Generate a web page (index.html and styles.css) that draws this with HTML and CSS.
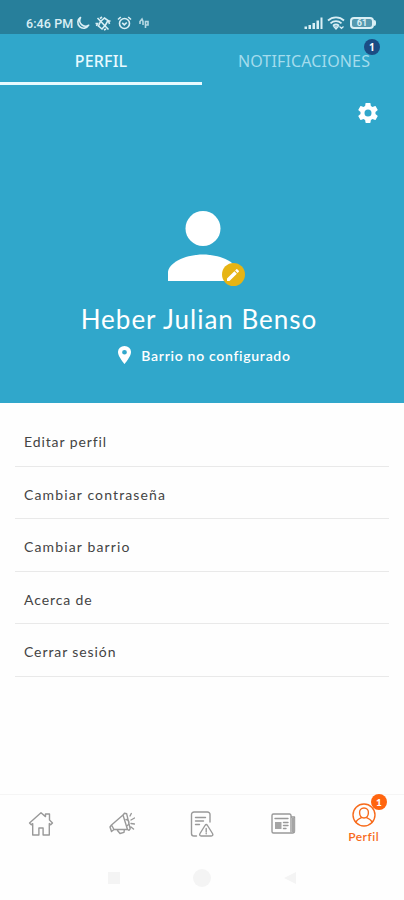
FILE: index.html
```
<!DOCTYPE html>
<html lang="es">
<head>
    <meta charset="UTF-8">
    <meta name="viewport" content="width=device-width, initial-scale=1.0">
    <title>Perfil</title>
    <link rel="stylesheet" href="styles.css">
</head>
<body>
<div id="app">
    <!-- Barra de estado -->
    <div class="status-bar">
        <div class="status-left">
            <span class="clock">6:46 PM</span>
            <svg width="14" height="14" viewBox="0 0 14 14" fill="none" stroke="currentColor" stroke-width="1.6">
                <path d="M4.500 1.500A5.800 5.800 0 1 0 12.700 9.200 5.800 5.800 0 0 1 4.500 1.500Z" stroke-linejoin="round"/>
            </svg>
            <svg class="vibrate" width="16" height="15" viewBox="0 0 16 15" fill="none" stroke="currentColor" stroke-width="1.600">
                <path d="M5.500 5.500 9.500 2 13 4.500 10.500 9 7 13 3.500 10ZM2.500 2l11 11.500M.5 7.500h2l-1 2.500M15.500 5h-2l1 3M5 2.500 7 1M9 14l2-1"/>
            </svg>
            <svg class="alarm" width="15" height="14" viewBox="0 0 15 14" fill="none" stroke="currentColor" stroke-width="1.600">
                <circle cx="7.500" cy="7.500" r="5"/>
                <path d="M1 3.500 3.800 1M14 3.500 11.200 1M5.200 6.800 7.300 8.800 9.800 6.500"/>
            </svg>
            <svg class="app-mark" width="11" height="12" viewBox="0 0 11 12" fill="none" stroke="currentColor" stroke-width="1.600">
                <path d="M1 7V4.500L3 2l1 2.500V8M6.500 11V4.500H9V8H7" opacity=".8"/>
            </svg>
        </div>
        <div class="status-right">
            <svg width="19" height="12" viewBox="0 0 19 12" fill="currentColor">
                <path d="M.5 9.500h2.500V12H.5zM4.500 8H7v4H4.500zM8.500 6H11v6H8.500zM12.500 3.500H15V12h-2.500zM16.500.5H18.500V12h-2z"/>
            </svg>
            <svg width="18" height="14" viewBox="0 0 18 14" fill="none" stroke="currentColor" stroke-width="1.800">
                <path d="M1 4.500C5.500.3 12.500.3 17 4.500M3.500 7.300c3.200-2.900 7.800-2.900 11 0M6 9.800c1.800-1.500 4.200-1.500 6 0"/>
                <path d="M7 10.800 9 13l2-2.200ZM12.500 10.500l2 2 2-2" stroke-width="1.200"/>
            </svg>
            <div class="battery">61</div>
        </div>
    </div>

    <!-- Cabecera con pestañas y datos del usuario -->
    <header class="hero">
        <nav class="tabs">
            <div class="tab active"><span>PERFIL</span></div>
            <div class="tab"><span>NOTIFICACIONES</span><b class="tab-badge">1</b></div>
        </nav>
        <div class="settings">
            <svg width="24" height="24" viewBox="0 0 24 24" fill="currentColor">
                <path d="M19.430 12.980c.04-.32.07-.64.07-.98s-.03-.66-.07-.98l2.110-1.650c.19-.15.24-.42.12-.64l-2-3.460c-.12-.22-.39-.3-.61-.22l-2.490 1c-.52-.4-1.080-.73-1.690-.98l-.38-2.650C14.460 2.180 14.250 2 14 2h-4c-.25 0-.46.18-.49.42l-.38 2.650c-.61.25-1.170.59-1.690.98l-2.490-1c-.23-.09-.49 0-.61.22l-2 3.460c-.13.22-.07.49.12.64l2.110 1.650c-.04.32-.07.65-.07.98s.03.66.07.98l-2.110 1.650c-.19.15-.24.42-.12.64l2 3.460c.12.22.39.3.61.22l2.490-1c.52.4 1.080.73 1.690.98l.38 2.650c.03.24.24.42.49.42h4c.25 0 .46-.18.49-.42l.38-2.650c.61-.25 1.170-.59 1.690-.98l2.490 1c.23.09.49 0 .61-.22l2-3.460c.12-.22.07-.49-.12-.64zM12 15.500a3.500 3.500 0 1 1 0-7 3.500 3.500 0 0 1 0 7z"/>
            </svg>
        </div>
        <div class="avatar">
            <svg width="70" height="70" viewBox="0 0 70 70" fill="currentColor">
                <circle cx="35" cy="17.500" r="17.500"/>
                <path d="M0 70V60.500C2 50 20 43.500 35 43.500S68 50 70 60.500V70Z"/>
            </svg>
            <div class="edit">
                <svg width="16" height="16" viewBox="0 0 24 24" fill="currentColor">
                    <path d="M3 17.250V21h3.750L17.810 9.940l-3.750-3.750zM20.710 7.040a1 1 0 0 0 0-1.410l-2.340-2.340a1 1 0 0 0-1.410 0l-1.830 1.830 3.750 3.750z"/>
                </svg>
            </div>
        </div>
        <h1>Heber Julian Benso</h1>
        <p class="place">
            <svg width="13" height="18" viewBox="0 0 12 18" fill="currentColor" fill-rule="evenodd" preserveAspectRatio="none">
                <path d="M6 0a6 6 0 0 0-6 6.200C0 10.500 6 18 6 18s6-7.500 6-11.800A6 6 0 0 0 6 0zm0 8.400a2.200 2.200 0 1 1 0-4.400 2.200 2.200 0 0 1 0 4.400z"/>
            </svg>
            <span>Barrio no configurado</span>
        </p>
    </header>

    <ul class="menu">
        <li>Editar perfil</li>
        <li class="wide">Cambiar contraseña</li>
        <li class="wide">Cambiar barrio</li>
        <li>Acerca de</li>
        <li>Cerrar sesión</li>
    </ul>

    <!-- Navegación inferior -->
    <nav class="bottom-nav">
        <div class="nav-item">
            <svg width="26" height="26" viewBox="0 0 26 26">
                <path d="M1.500 12 13 1.800l4.500 3.800V3h4v6l3 3-1.800 1.800-1.400-1.200V24h-6.200v-7h-4.200v7H4.700V12.600l-1.400 1.200Z"/>
            </svg>
        </div>
        <div class="nav-item">
            <svg width="26" height="26" viewBox="0 0 26 26">
                <path d="M2.500 14 14 4l4.500 14.500H5ZM2.500 14 1 16l1.500 4.500L5 18.500M14 4l1.500-1.800 2.200.6 3.500 15-1.200 1.500-1.500-.8M17 8.500c3 0 4 4 1.500 6M8.500 19.500l2.500 3 4-1.200.3-2.300M21 5l1.300-2.500M22 9l3.500-2M22 12.500l3.500.5M22 16l2.500 2"/>
            </svg>
        </div>
        <div class="nav-item">
            <svg width="26" height="26" viewBox="0 0 26 26">
                <path d="M7.500 25H5a2.500 2.500 0 0 1-2.500-2.500v-19A2.500 2.500 0 0 1 5 1h13.500A2.500 2.500 0 0 1 21 3.500V11M6.500 6.500h10M6.500 10h8M6.500 13.500h4M16 14.500c.8-1.300 1.700-1.300 2.500 0l5 8c.8 1.400.2 2.500-1.200 2.500H12.200c-1.400 0-2-1.100-1.200-2.500ZM17.200 17.500v3.500M17.200 22.500v.3"/>
            </svg>
        </div>
        <div class="nav-item">
            <svg width="26" height="22" viewBox="0 0 26 22">
                <path d="M21 18.500V2.500A1.500 1.500 0 0 0 19.500 1h-16A1.500 1.500 0 0 0 2 2.500v16A1.500 1.500 0 0 0 3.500 20h19a2 2 0 0 0 2-2V4H21M5 5.500h13M13.500 9.500H18M13.500 12.500H18M13.500 15.500H16"/>
                <path class="solid" d="M5 9h6.500v7H5zM22 5h3v14h-3z"/>
            </svg>
        </div>
        <div class="nav-item current">
            <svg width="24" height="24" viewBox="0 0 24 24">
                <circle cx="12" cy="12" r="11"/>
                <path d="M12 5c3 0 4.600 2 4.400 5-.2 3-2 5-4.400 5s-4.200-2-4.400-5C7.400 7 9 5 12 5ZM4 19.500c.5-2.500 2.500-3.500 5.500-4.800M20 19.500c-.5-2.500-2.500-3.500-5.500-4.800"/>
            </svg>
            <span>Perfil</span>
            <b class="nav-badge">1</b>
        </div>
    </nav>

    <div class="system-nav">
        <svg width="14" height="14" viewBox="0 0 14 14"><path d="M1 1h12v12H1z"/></svg>
        <svg width="20" height="20" viewBox="0 0 20 20"><circle cx="10" cy="10" r="9"/></svg>
        <svg width="14" height="14" viewBox="0 0 14 14"><path d="M13 1v12L1 7z"/></svg>
    </div>
</div>
</body>
</html>
```

FILE: styles.css
```
:root {
    --blue: #30a7cb;
    --blue-dark: #277f9b;
    --orange: #f76b1c;
    --text: #444;
    --line: #e9e9e9;
}

* {
    margin: 0;
    padding: 0;
    box-sizing: border-box;
}

body {
    background: #fefefe;
    color: var(--text);
    font-family: Lato, "Open Sans", sans-serif;
}

#app {
    display: flex;
    flex-direction: column;
    height: 900px;
    overflow: hidden;
}

svg {
    display: block;
    flex: none;
}

/* Barra de estado */
.status-bar {
    display: flex;
    justify-content: space-between;
    height: 34px;
    padding: 11px 28px 0 26px;
    background: var(--blue-dark);
    color: #d9eff5;
}

.status-left,
.status-right {
    display: flex;
    align-items: center;
    height: 24px;
}

.clock {
    width: 50px;
    font-family: Roboto, sans-serif;
    font-size: 12.5px;
    font-weight: 500;
    letter-spacing: 0.1px;
    white-space: nowrap;
}

.vibrate {
    margin-left: 5px;
}

.alarm {
    margin-left: 6px;
}

.app-mark {
    margin-left: 7px;
}

.status-right {
    gap: 4px;
}

.battery {
    position: relative;
    width: 24px;
    height: 12px;
    margin: 0 2px 0 1px;
    border: 2px solid currentColor;
    border-radius: 4px;
    background: #5599af;
    font: bold 9px/8px Roboto, sans-serif;
    text-align: center;
}

.battery::after {
    content: "";
    position: absolute;
    top: 1px;
    right: -4px;
    width: 2px;
    height: 6px;
    border-radius: 0 2px 2px 0;
    background: currentColor;
}

/* Cabecera */
.hero {
    display: flex;
    flex-direction: column;
    align-items: center;
    height: 369px;
    background: var(--blue);
    color: #fff;
}

.tabs {
    display: flex;
    width: 100%;
    height: 51px;
}

.tab {
    position: relative;
    width: 50%;
    padding-top: 16px;
    border-bottom: 3px solid transparent;
    color: #a4dced;
    font-family: "Noto Sans", sans-serif;
    font-size: 16px;
    line-height: 22px;
    letter-spacing: 0.15px;
    text-align: center;
}

.tab:last-child {
    padding-left: 2px;
}

.tab.active {
    border-color: #e8faff;
    color: #e8faff;
    font-weight: 500;
}

.tab-badge {
    position: absolute;
    top: 5px;
    right: 24px;
    width: 16px;
    height: 16px;
    border-radius: 50%;
    background: #1b4c84;
    color: #fff;
    font-size: 10px;
    line-height: 16px;
}

.settings {
    align-self: flex-end;
    margin: 16px 24px 0 0;
}

.avatar {
    position: relative;
    margin: 86px 0 0 1px;
}

.edit {
    position: absolute;
    right: -7px;
    bottom: -5px;
    display: flex;
    align-items: center;
    justify-content: center;
    width: 23px;
    height: 23px;
    border-radius: 50%;
    background: #e6b414;
}

h1 {
    margin-top: 22px;
    padding-right: 6px;
    font-size: 26px;
    font-weight: 400;
    line-height: 32px;
    letter-spacing: 1px;
    white-space: nowrap;
}

.place {
    display: flex;
    align-items: center;
    gap: 10px;
    margin: 9px 0 0 5px;
    font-size: 14px;
    font-weight: 600;
    line-height: 20px;
    letter-spacing: 0.7px;
}

.place span {
    padding-top: 2px;
}

/* Opciones */
.menu {
    margin: 11px 15px 0;
    list-style: none;
}

.menu li {
    height: 52.5px;
    padding: 18px 9px 0;
    border-bottom: 1px solid var(--line);
    font-size: 14px;
    line-height: 20px;
    letter-spacing: 0.9px;
}

.menu li.wide {
    letter-spacing: 1.13px;
}

/* Navegación inferior */
.bottom-nav {
    display: flex;
    height: 68px;
    margin-top: auto;
    padding-left: 1px;
    border-top: 1px solid #f5f5f5;
}

.nav-item {
    position: relative;
    display: flex;
    flex-direction: column;
    align-items: center;
    justify-content: center;
    width: 20%;
    padding-bottom: 10px;
}

.nav-item svg {
    fill: none;
    stroke: #999;
    stroke-width: 1.4;
    stroke-linejoin: round;
    stroke-linecap: round;
}

.nav-item .solid {
    fill: #a5a5a5;
    stroke: none;
}

.nav-item.current {
    justify-content: flex-start;
    padding-top: 8px;
    color: var(--orange);
    font-size: 12px;
    font-weight: 600;
    line-height: 16px;
    letter-spacing: 0.5px;
}

.nav-item.current svg {
    margin-bottom: 2px;
    stroke: var(--orange);
}

.nav-badge {
    position: absolute;
    top: -1px;
    right: 17px;
    width: 16px;
    height: 16px;
    border-radius: 50%;
    background: #ff650f;
    color: #fff;
    font-size: 10px;
    letter-spacing: 0;
    text-align: center;
}

.system-nav {
    display: flex;
    align-items: flex-start;
    justify-content: space-between;
    height: 38px;
    padding: 6px 107px 0;
}

.system-nav svg {
    height: 20px;
    fill: #f4f4f4;
}
```
